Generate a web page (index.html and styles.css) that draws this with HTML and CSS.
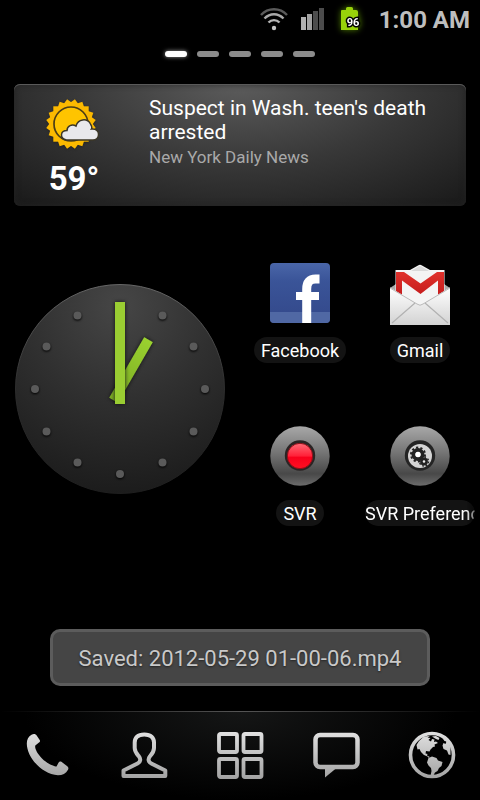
FILE: index.html
```html
<!DOCTYPE html>
<html lang="en">
<head>
    <meta charset="UTF-8">
    <title>Home</title>
    <meta name="viewport" content="width=device-width, initial-scale=1.0">
    <link rel="stylesheet" href="styles.css">
</head>
<body>
    <!-- shared gradients -->
    <svg class="defs" width="0" height="0" aria-hidden="true">
        <defs>
            <linearGradient id="silver" gradientUnits="userSpaceOnUse" x1="0" y1="0" x2="0" y2="48">
                <stop offset="0" stop-color="#e2e2e2"/>
                <stop offset="1" stop-color="#a2a2a2"/>
            </linearGradient>
            <linearGradient id="knob" x1="0" y1="0" x2="0" y2="1">
                <stop offset="0" stop-color="#a8a8a8"/>
                <stop offset="0.45" stop-color="#747474"/>
                <stop offset="0.8" stop-color="#484848"/>
                <stop offset="1" stop-color="#6c6c6c"/>
            </linearGradient>
        </defs>
    </svg>

    <header class="status-bar">
        <svg class="wifi" width="28" height="23" viewBox="0 0 28 23" fill="none" stroke-width="2.4" aria-label="Wi-Fi">
            <path d="M1 7C8 -.6 20 -.6 27 7" stroke="#5a5a5a"/>
            <path d="M4.500 10.500C10 4.800 18 4.800 23.500 10.500" stroke="#a9a9a9"/>
            <path d="M8.500 14.500C11.500 11.300 16.500 11.300 19.500 14.500" stroke="#b4b4b4"/>
            <circle cx="14" cy="20" r="2.200" fill="#c4c4c4"/>
        </svg>
        <svg class="signal" width="24" height="22" viewBox="0 0 24 22" aria-label="Signal">
            <rect x="0" y="9" width="5" height="13" fill="#b0b0b0"/>
            <rect x="6" y="6" width="5" height="16" fill="#a2a2a2"/>
            <rect x="12" y="3" width="5" height="19" fill="#4c4c4c"/>
            <rect x="18" y="0" width="5" height="22" fill="#4c4c4c"/>
        </svg>
        <svg class="battery" width="22" height="24" viewBox="0 0 22 24">
            <path d="M2 3h4V1.500Q6 0 7.500 0h4Q13 0 13 1.500V3h3q2 0 2 2v18H1V4q0-1 1-1z" fill="#98d20a"/>
            <text x="13" y="19" text-anchor="middle">96</text>
        </svg>
        <span class="time">1:00 AM</span>
    </header>

    <nav class="pager" aria-label="Screens">
        <button class="page current" aria-label="Screen 1"></button>
        <button class="page" aria-label="Screen 2"></button>
        <button class="page" aria-label="Screen 3"></button>
        <button class="page" aria-label="Screen 4"></button>
        <button class="page" aria-label="Screen 5"></button>
    </nav>

    <section class="news-card">
        <div class="weather">
            <svg width="58" height="56" viewBox="0 0 58 56" aria-hidden="true">
                <!-- five turned squares make the twenty rays -->
                <g class="rays" fill="#fbb900">
                    <rect x="8.300" y="8.300" width="35.400" height="35.400"/>
                    <rect x="8.300" y="8.300" width="35.400" height="35.400" transform="rotate(18 26 26)"/>
                    <rect x="8.300" y="8.300" width="35.400" height="35.400" transform="rotate(36 26 26)"/>
                    <rect x="8.300" y="8.300" width="35.400" height="35.400" transform="rotate(54 26 26)"/>
                    <rect x="8.300" y="8.300" width="35.400" height="35.400" transform="rotate(72 26 26)"/>
                </g>
                <circle cx="26" cy="26" r="17" fill="#ffc400" stroke="#4b3d16" stroke-width="1.700"/>
                <path d="M21.500 42Q16 41 16.500 36.500 17 32.500 22 32.500C22 28 27 25.500 31 28 33 21 42 19.500 45.500 26Q47.500 29.500 46.500 31C51 30.500 54 33 53.500 37 53 40.500 50.500 42 48 42z" fill="#e9e9ec" stroke="#3c3726" stroke-width="1.500"/>
            </svg>
            <span class="temp">59°</span>
        </div>
        <div class="story">
            <h1>Suspect in Wash. teen's death arrested</h1>
            <p>New York Daily News</p>
        </div>
    </section>

    <main class="home">
        <svg class="clock" viewBox="0 0 210 210" aria-label="Clock">
            <defs>
                <radialGradient id="face" cx="0.5" cy="0.1" r="0.9">
                    <stop offset="0" stop-color="#464646"/>
                    <stop offset="0.5" stop-color="#303030"/>
                    <stop offset="1" stop-color="#1c1c1c"/>
                </radialGradient>
                <linearGradient id="rim" x1="0" y1="0" x2="0" y2="1">
                    <stop offset="0" stop-color="#666"/>
                    <stop offset="0.5" stop-color="#2c2c2c"/>
                    <stop offset="1" stop-color="#1e1e1e"/>
                </linearGradient>
                <linearGradient id="hour" x1="0" y1="0" x2="0" y2="1">
                    <stop offset="0" stop-color="#9ad22f"/>
                    <stop offset="1" stop-color="#7aa923"/>
                </linearGradient>
            </defs>
            <circle cx="105" cy="105" r="104.500" fill="url(#face)" stroke="url(#rim)"/>
            <g class="marks">
                <circle cx="147.500" cy="31.500" r="4"/>
                <circle cx="178.500" cy="62.500" r="4"/>
                <circle cx="190" cy="105" r="4"/>
                <circle cx="178.500" cy="147.500" r="4"/>
                <circle cx="147.500" cy="178.500" r="4"/>
                <circle cx="105" cy="190" r="4"/>
                <circle cx="62.500" cy="178.500" r="4"/>
                <circle cx="31.500" cy="147.500" r="4"/>
                <circle cx="20" cy="105" r="4"/>
                <circle cx="31.500" cy="62.500" r="4"/>
                <circle cx="62.500" cy="31.500" r="4"/>
            </g>
            <g class="hands">
                <rect x="100" y="48" width="10" height="70" fill="url(#hour)" transform="rotate(30 105 105)"/>
                <rect x="100" y="18" width="10" height="102" fill="#9acd32"/>
            </g>
        </svg>

        <div class="apps">
            <a class="app" href="#">
                <svg width="60" height="60" viewBox="0 0 60 60" aria-hidden="true">
                    <defs>
                        <linearGradient id="blue" x1="0" y1="0" x2="0" y2="1">
                            <stop offset="0" stop-color="#4a66a8"/>
                            <stop offset="0.3" stop-color="#3a5498"/>
                            <stop offset="1" stop-color="#33488a"/>
                        </linearGradient>
                    </defs>
                    <rect width="60" height="60" rx="4" fill="url(#blue)"/>
                    <path d="M0 49H60V56Q60 60 56 60H4Q0 60 0 56z" fill="#5068a4"/>
                    <path d="M36.700 60V26Q36.700 16 45.500 16H49.500" fill="none" stroke="#fff" stroke-width="9"/>
                    <rect x="26" y="29" width="23" height="8" fill="#fff"/>
                </svg>
                <span class="label">Facebook</span>
            </a>
            <a class="app" href="#">
                <svg width="60" height="60" viewBox="0 0 60 60" aria-hidden="true">
                    <defs>
                        <linearGradient id="paper" x1="0" y1="0" x2="0" y2="1">
                            <stop offset="0" stop-color="#fff"/>
                            <stop offset="1" stop-color="#d2d2d2"/>
                        </linearGradient>
                        <linearGradient id="red" x1="0" y1="0" x2="0" y2="1">
                            <stop offset="0" stop-color="#e0322c"/>
                            <stop offset="1" stop-color="#c0181a"/>
                        </linearGradient>
                    </defs>
                    <path d="M0 25L6 21H54L60 25V40H0z" fill="#a9a9a9"/>
                    <path d="M5.500 7H20L28 2.500Q30 1 32 2.500L40 7H54.500V45H5.500z" fill="#f4f4f4"/>
                    <path d="M21 8L28.500 3.500Q30 2.500 31.500 3.500L39 8z" fill="#dadada"/>
                    <path d="M6 34V9H14L30.500 20.500 47 9H54V34L48 37V17.500L30.500 31 12 17.500V37z" fill="url(#red)"/>
                    <path d="M0 24.500L27 40.500Q30 43 33 40.500L60 24.500V62H0z" fill="url(#paper)"/>
                    <path d="M2 60L25 40M58 60L35 40" fill="none" stroke="#b2b2b2" stroke-width="1.200"/>
                    <path d="M0 25L27 41Q30 43.500 33 41L60 25" fill="none" stroke="#bbb"/>
                </svg>
                <span class="label">Gmail</span>
            </a>
            <a class="app" href="#">
                <svg width="60" height="60" viewBox="0 0 60 60" aria-hidden="true">
                    <defs>
                        <linearGradient id="rec" x1="0" y1="0" x2="0" y2="1">
                            <stop offset="0" stop-color="#ff6a76"/>
                            <stop offset="0.5" stop-color="#ff2038"/>
                            <stop offset="0.55" stop-color="#f8001c"/>
                            <stop offset="1" stop-color="#ff1022"/>
                        </linearGradient>
                    </defs>
                    <circle cx="30" cy="30" r="29.700" fill="url(#knob)"/>
                    <circle cx="30" cy="29.500" r="15.200" fill="#2a2424"/>
                    <circle cx="30" cy="30" r="12.700" fill="url(#rec)" stroke="#8a1018"/>
                </svg>
                <span class="label">SVR</span>
            </a>
            <a class="app" href="#">
                <svg width="60" height="60" viewBox="0 0 60 60" aria-hidden="true">
                    <circle cx="30" cy="30" r="29.700" fill="url(#knob)"/>
                    <circle cx="30" cy="29.500" r="15.200" fill="#242424"/>
                    <circle cx="30" cy="30" r="12" fill="#d4d4d4"/>
                    <circle cx="28" cy="28.500" r="4.500" fill="none" stroke="#222" stroke-width="4"/>
                    <circle cx="28" cy="28.500" r="7" fill="none" stroke="#222" stroke-width="2" stroke-dasharray="2.200 2.200"/>
                    <circle cx="28" cy="28.500" r="2.700" fill="#fff"/>
                    <circle cx="34" cy="35.500" r="2.600" fill="#eee" stroke="#222" stroke-width="2.600"/>
                    <circle cx="34" cy="35.500" r="4.500" fill="none" stroke="#222" stroke-width="1.500" stroke-dasharray="1.700 1.800"/>
                </svg>
                <span class="label label-long">SVR Preferences</span>
            </a>
        </div>
    </main>

    <div class="toast" role="status">Saved: 2012-05-29 01-00-06.mp4</div>

    <nav class="dock">
        <button aria-label="Phone">
            <svg width="48" height="48" viewBox="0 0 48 48">
                <path d="M7.500 3.700C10 2.500 11.700 3 13 5L15.700 9C16.300 10 16 11 15 11.600L11.300 14.500C10.500 17 13 22.500 18 27.500S30 35.500 32.500 35.500L34.500 31.700C35.200 30.500 36.500 30.300 37.700 31L43.300 35.200C44.500 36.200 44.700 37.500 44 38.800 42 42.500 38.500 44.300 34 44.300 18 43 3 27 2.800 12.500 2.800 8.500 4.500 5.200 7.500 3.700z" fill="url(#silver)"/>
            </svg>
        </button>
        <button aria-label="Contacts">
            <svg width="48" height="48" viewBox="0 0 48 48">
                <path d="M24.300 3.500C17.500 3.500 14.700 7 14.700 11.500V17C14.700 21 17 23.200 19 25.500 21 28 20.500 31 17.500 32.500L3.500 39.500V45H45.300V39.500L31.300 32.500C28.300 31 27.800 28 29.800 25.500 31.800 23.200 34 21 34 17V11.500C34 7 31 3.500 24.300 3.500z" fill="none" stroke="url(#silver)" stroke-width="4" stroke-linejoin="round"/>
            </svg>
        </button>
        <button aria-label="All apps">
            <svg width="48" height="48" viewBox="0 0 48 48" fill="none" stroke="url(#silver)" stroke-width="3.800">
                <rect x="3" y="3" width="18" height="18" rx="1.500"/>
                <rect x="27.500" y="3" width="18" height="18" rx="1.500"/>
                <rect x="3" y="28" width="18" height="18" rx="1.500"/>
                <rect x="27.500" y="28" width="18" height="18" rx="1.500"/>
            </svg>
        </button>
        <button aria-label="Messages">
            <svg width="48" height="48" viewBox="0 0 48 48">
                <rect x="3.500" y="4" width="42" height="32" rx="4.500" fill="none" stroke="url(#silver)" stroke-width="4.500"/>
                <path d="M13 37V46.500L24.500 37z" fill="url(#silver)"/>
            </svg>
        </button>
        <button aria-label="Browser">
            <svg width="48" height="48" viewBox="0 0 48 48">
                <circle cx="24" cy="24" r="21.500" fill="none" stroke="url(#silver)" stroke-width="3.600"/>
                <g fill="url(#silver)">
                    <path d="M16 5.500L11 10 8.500 14 9.500 18.500 11.500 18 13 21 16 24 19.500 25.500 21 27 21.500 25.700 19 24.500 19.500 23 17.500 22.500 18 20 21.500 20.500 22.500 18.500 25 16 27 15.500 26.500 13.500 30 12 28 10.500 26 11 26.500 8.500 24 8 23 10.500 20.500 9 22.500 7 19.500 6.500 22 5z"/>
                    <path d="M24 5.500L28 5 31.500 7 30.500 9 28 8z"/>
                    <path d="M20.500 27L24 25.500 28.500 27 30 29.500 34.500 31 33.500 35 31 37 29.500 40 27 41.500 24.500 46 22.500 45 23.500 40 23 37 20.500 34.500 19 31.500z"/>
                    <path d="M34 6.500L36.500 10 38.500 10.500 37.500 13 35.500 12 34.500 14.500 35.500 18 39 19.500 40.500 23.500 42.500 24V16L40 10z"/>
                </g>
            </svg>
        </button>
    </nav>
</body>
</html>
```
FILE: styles.css
```css
* {
    box-sizing: border-box;
}
body {
    margin: 0;
    min-height: 100vh;
    display: flex;
    flex-direction: column;
    background: #000;
    color: #fff;
    font-family: Roboto, "Liberation Sans", sans-serif;
}
button {
    border: none;
    padding: 0;
    background: none;
    cursor: pointer;
}
svg {
    display: block;
    overflow: visible;
}
.defs {
    position: absolute;
}

/* status bar */
.status-bar {
    display: flex;
    justify-content: flex-end;
    align-items: center;
    height: 38px;
    padding-right: 10px;
}
.signal {
    margin-left: 13px;
}
.battery {
    margin: 0 17px 0 15px;
    filter: drop-shadow(0 0 3px #4d7a00);
}
.battery text {
    font-size: 11px;
    font-weight: bold;
    fill: #fff;
    stroke: #000;
    stroke-width: 3px;
    paint-order: stroke;
}
.time {
    font-size: 24px;
    line-height: 38px;
    font-weight: bold;
    color: #bebebe;
    padding-top: 2px;
}

/* screen indicator */
.pager {
    display: flex;
    justify-content: center;
    gap: 10px;
    padding: 13px 0 27px;
}
.page {
    width: 22px;
    height: 6px;
    border-radius: 3px;
    background: #8c8c8c;
}
.current {
    background: #fff;
    box-shadow: 0 0 4px #999;
}

/* weather and news */
.news-card {
    display: flex;
    gap: 15px;
    margin: 0 14px;
    min-height: 122px;
    border-radius: 6px;
    background: radial-gradient(ellipse 75% 130% at 50% 0, #5c5c5c 0%, #383838 50%, #1a1a1a 100%);
    box-shadow: inset 0 1px 0 #5a5a5a, inset 0 0 6px #222;
}
.weather {
    width: 120px;
    display: flex;
    flex-direction: column;
    align-items: center;
    padding-top: 14px;
}
.rays {
    filter: drop-shadow(0 1px 1px #222);
}
.temp {
    font-size: 33px;
    line-height: 50px;
    font-weight: bold;
}
.story {
    flex: 1;
    padding-top: 12px;
}
.story h1 {
    margin: 0;
    font-size: 21px;
    line-height: 24px;
    font-weight: normal;
}
.story p {
    margin: 2px 0 0;
    font-size: 17px;
    line-height: 22px;
    color: #a9a9a9;
}

/* clock and shortcuts */
.home {
    flex: 1;
    display: grid;
    grid-template-columns: 1fr 1fr;
    align-items: start;
    padding-top: 57px;
}
.clock {
    width: calc(100% - 30px);
    margin: 21px auto 0;
}
.marks {
    fill: #5a5a5a;
    filter: drop-shadow(0 1px 1px #000);
}
.hands rect {
    filter: drop-shadow(0 0 2px #111);
}
.apps {
    display: grid;
    grid-template-columns: 1fr 1fr;
    row-gap: 63px;
}
.app {
    display: flex;
    flex-direction: column;
    align-items: center;
    gap: 14px;
    color: #fff;
    text-decoration: none;
}
.label {
    padding: 1px 7px 0;
    border-radius: 13px;
    background: #131313;
    font-size: 18px;
    line-height: 25px;
    white-space: nowrap;
}
.label-long {
    width: 110px;
    padding: 1px 0 0;
    overflow: hidden;
    -webkit-mask-image: linear-gradient(90deg, #000 92%, #0006);
    mask-image: linear-gradient(90deg, #000 92%, #0006);
}

/* message */
.toast {
    margin: 0 50px 25px;
    padding: 14px 10px 12px;
    border: 3px solid #5c5c5c;
    border-radius: 10px;
    background: #454545;
    color: #c9c9c9;
    font-size: 22px;
    line-height: 25px;
    text-align: center;
    text-shadow: 0 1px 2px #222;
}

/* bottom row */
.dock {
    display: grid;
    grid-template-columns: repeat(5, 1fr);
    justify-items: center;
    padding: 20px 0 21px;
    background:
        linear-gradient(90deg, #000, #555 50%, #000) top / 100% 1px no-repeat,
        radial-gradient(ellipse 45% 100% at 50% 0, #151616, #000);
}
```
